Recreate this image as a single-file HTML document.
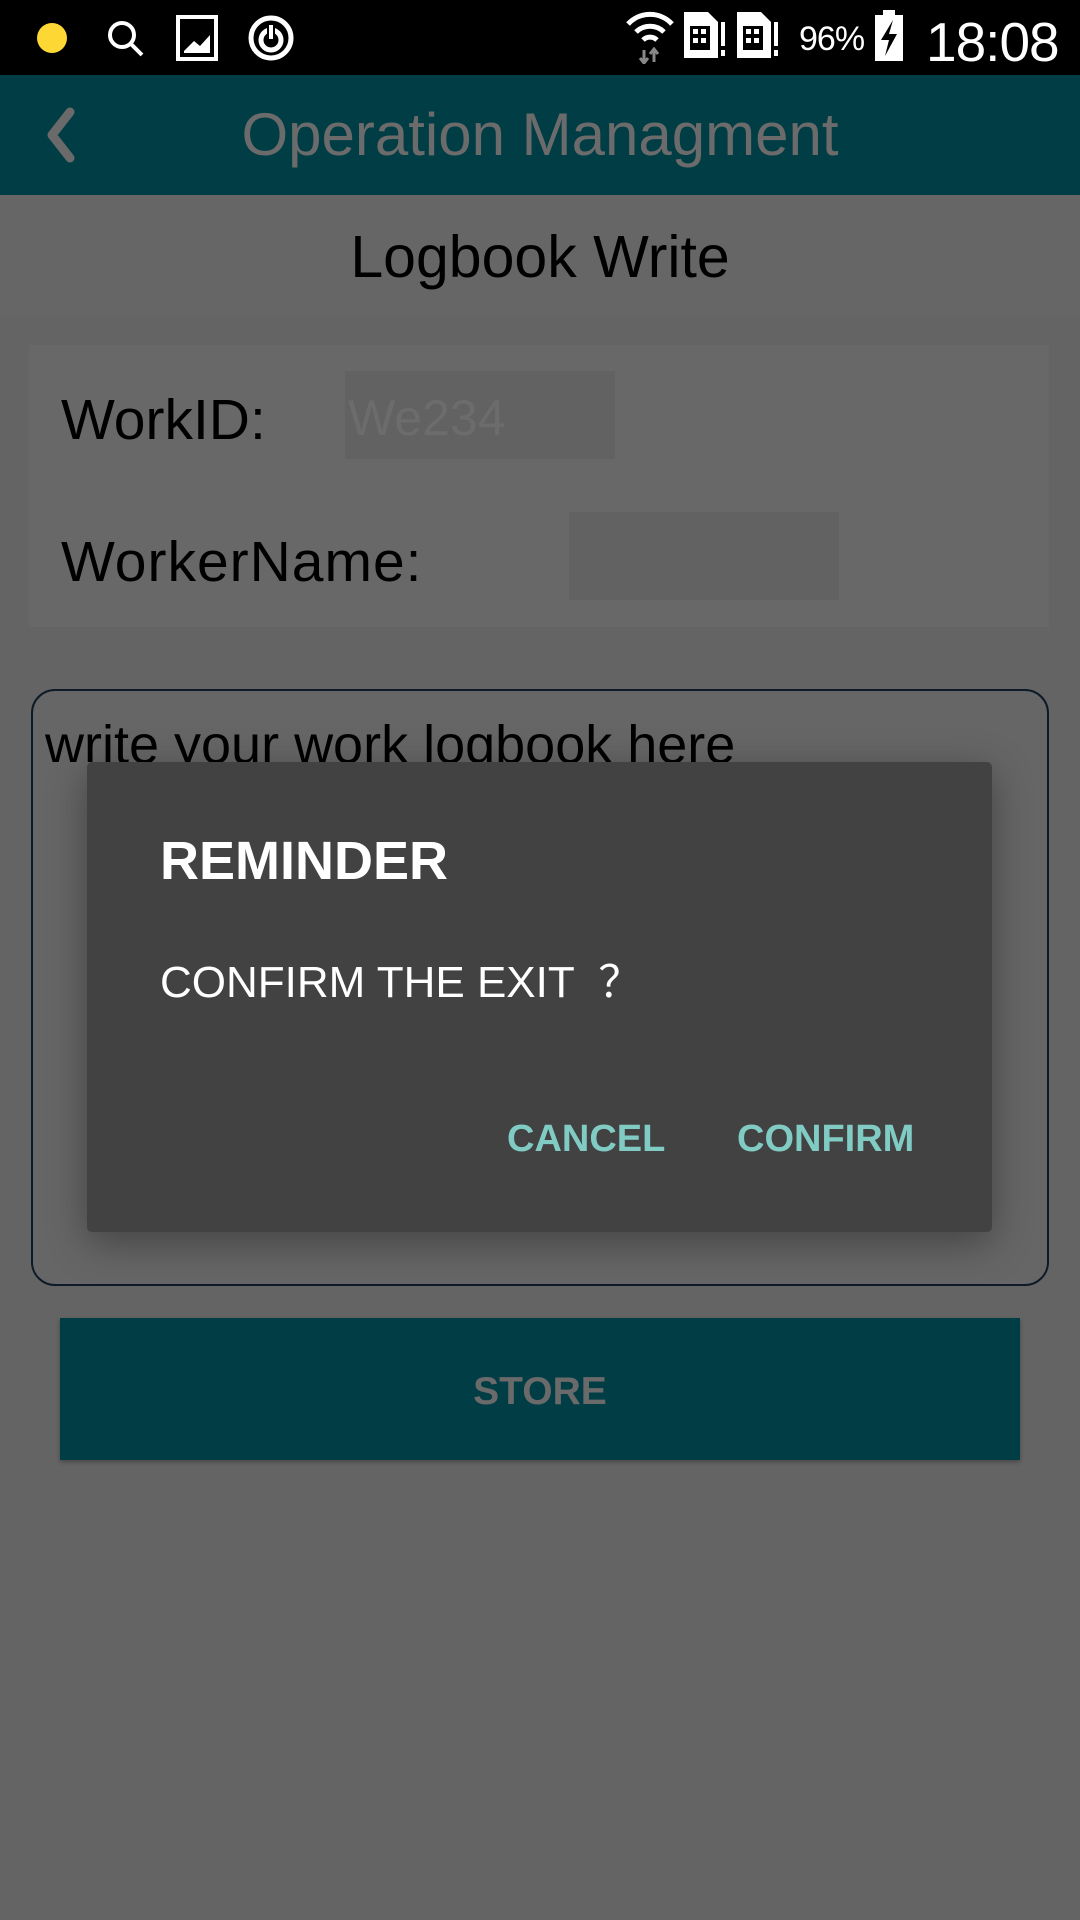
<!DOCTYPE html>
<html><head><meta charset="utf-8"><style>
*{margin:0;padding:0;box-sizing:border-box}
body{width:1080px;height:1920px;background:#646464;position:relative;overflow:hidden;font-family:"Liberation Sans",sans-serif}
.a{position:absolute}
</style></head><body>
<div class="a" style="left:0;top:0;width:1080px;height:75px;background:#000"></div>
<div class="a" style="left:37px;top:23px;width:30px;height:30px;border-radius:50%;background:#fdd835"></div>
<svg class="a" style="left:104px;top:17px" width="44" height="44" viewBox="0 0 44 44"><circle cx="18" cy="18" r="12" fill="none" stroke="#fff" stroke-width="4"/><line x1="27" y1="27" x2="38" y2="38" stroke="#fff" stroke-width="4"/></svg>
<svg class="a" style="left:176px;top:15px" width="44" height="46" viewBox="0 0 44 46"><rect x="2" y="2" width="38" height="42" fill="none" stroke="#fff" stroke-width="4"/><path d="M8 36 L18 26 L24 31 L34 20 L34 38 L8 38Z" fill="#fff"/></svg>
<svg class="a" style="left:246px;top:13px" width="50" height="50" viewBox="0 0 50 50"><circle cx="25" cy="25" r="20" fill="none" stroke="#fff" stroke-width="5"/><circle cx="25" cy="27" r="10" fill="none" stroke="#fff" stroke-width="5"/><line x1="25" y1="8" x2="25" y2="24" stroke="#000" stroke-width="8"/><line x1="25" y1="12" x2="25" y2="26" stroke="#fff" stroke-width="4"/></svg>
<svg class="a" style="left:624px;top:8px" width="52" height="56" viewBox="0 0 52 56"><path d="M4 16 A30 30 0 0 1 48 16" fill="none" stroke="#fff" stroke-width="5"/><path d="M12 24 A20 20 0 0 1 40 24" fill="none" stroke="#fff" stroke-width="5"/><path d="M19 32 A10 10 0 0 1 33 32" fill="none" stroke="#fff" stroke-width="5"/><path d="M20 42 v12 M16 50 l4 5 l4-5 M30 54 v-12 M26 46 l4-5 l4 5" stroke="#888" stroke-width="3" fill="none"/></svg>
<svg class="a" style="left:684px;top:12px" width="42" height="48" viewBox="0 0 42 48"><path d="M0 0 H24 L34 10 V46 H0Z" fill="#fff"/><rect x="6" y="14" width="20" height="24" fill="#000"/><rect x="9" y="17" width="5" height="5" fill="#fff"/><rect x="17" y="17" width="5" height="5" fill="#fff"/><rect x="9" y="26" width="5" height="5" fill="#fff"/><rect x="17" y="26" width="5" height="5" fill="#fff"/><rect x="37" y="10" width="4" height="24" fill="#fff"/><rect x="37" y="38" width="4" height="6" fill="#fff"/></svg>
<svg class="a" style="left:737px;top:12px" width="42" height="48" viewBox="0 0 42 48"><path d="M0 0 H24 L34 10 V46 H0Z" fill="#fff"/><rect x="6" y="14" width="20" height="24" fill="#000"/><rect x="9" y="17" width="5" height="5" fill="#fff"/><rect x="17" y="17" width="5" height="5" fill="#fff"/><rect x="9" y="26" width="5" height="5" fill="#fff"/><rect x="17" y="26" width="5" height="5" fill="#fff"/><rect x="37" y="10" width="4" height="24" fill="#fff"/><rect x="37" y="38" width="4" height="6" fill="#fff"/></svg>
<div class="a" style="left:799px;top:20px;color:#fff;font-size:34px;letter-spacing:-1px">96%</div>
<svg class="a" style="left:873px;top:10px" width="32" height="52" viewBox="0 0 32 52"><rect x="10" y="0" width="12" height="6" fill="#fff"/><rect x="2" y="5" width="28" height="46" fill="#fff"/><path d="M20 10 L8 30 H16 L12 46 L24 24 H16Z" fill="#000"/></svg>
<div class="a" style="left:926px;top:10px;color:#fff;font-size:55px;letter-spacing:-1px">18:08</div>

<div class="a" style="left:0;top:75px;width:1080px;height:120px;background:#003d45"></div>
<svg class="a" style="left:40px;top:106px" width="40" height="58" viewBox="0 0 40 58"><path d="M30 6 L12 29 L30 52" fill="none" stroke="#6a6a6a" stroke-width="9" stroke-linecap="round" stroke-linejoin="round"/></svg>
<div class="a" style="left:0;top:100px;width:1080px;text-align:center;color:#6b6b6b;font-size:60px">Operation Managment</div>

<div class="a" style="left:0;top:195px;width:1080px;height:121px;background:#666"></div>
<div class="a" style="left:0;top:223px;width:1080px;text-align:center;color:#000;font-size:59px">Logbook Write</div>

<div class="a" style="left:29px;top:345px;width:1020px;height:282px;background:#686868"></div>
<div class="a" style="left:61px;top:387px;color:#000;font-size:57px">WorkID:</div>
<div class="a" style="left:345px;top:371px;width:270px;height:88px;background:#626262"></div>
<div class="a" style="left:348px;top:389px;color:#6c6c6c;font-size:50px">We234</div>
<div class="a" style="left:61px;top:529px;color:#000;font-size:57px;letter-spacing:1px">WorkerName:</div>
<div class="a" style="left:569px;top:512px;width:270px;height:88px;background:#626262"></div>

<div class="a" style="left:31px;top:689px;width:1018px;height:597px;border:2px solid #0d1b28;border-radius:24px;background:#666"></div>
<div class="a" style="left:45px;top:712px;height:50px;overflow:hidden;color:#000;font-size:54px;line-height:66px">write your work logbook here</div>

<div class="a" style="left:87px;top:762px;width:905px;height:470px;background:#424242;border-radius:5px;box-shadow:0 10px 40px rgba(0,0,0,0.35)"></div>
<div class="a" style="left:160px;top:830px;color:#fff;font-size:54px;font-weight:bold">REMINDER</div>
<div class="a" style="left:160px;top:961px;color:#fff;font-size:44px;line-height:1">CONFIRM THE EXIT &nbsp;？</div>
<div class="a" style="left:507px;top:1118px;color:#80cbc4;font-size:38px;font-weight:bold">CANCEL</div>
<div class="a" style="left:737px;top:1118px;color:#80cbc4;font-size:38px;font-weight:bold">CONFIRM</div>

<div class="a" style="left:60px;top:1318px;width:960px;height:142px;background:#003d45;box-shadow:0 2px 4px rgba(0,0,0,0.3)"></div>
<div class="a" style="left:60px;top:1370px;width:960px;text-align:center;color:#6a6a6a;font-size:39px;font-weight:bold">STORE</div>
</body></html>
